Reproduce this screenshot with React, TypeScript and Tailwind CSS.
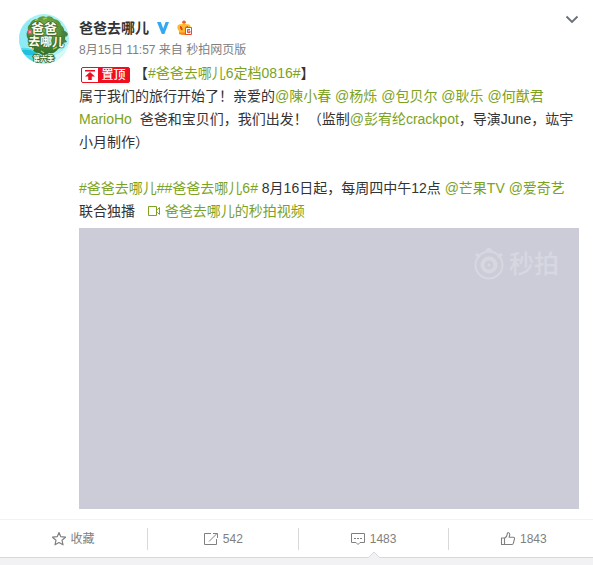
import type { ReactNode } from 'react'

interface ActionItem {
  id: string
  label: string
  icon: ReactNode
  active?: boolean
}

const actions: ActionItem[] = [
  { id: 'favorite', label: '收藏', icon: <StarIcon /> },
  { id: 'forward', label: '542', icon: <ForwardIcon /> },
  { id: 'comment', label: '1483', icon: <CommentIcon />, active: true },
  { id: 'like', label: '1843', icon: <LikeIcon /> },
]

function StarIcon() {
  return (
    <svg className="h-4 w-4" viewBox="0 0 16 16" fill="none" stroke="#808080" strokeWidth="1.2" strokeLinejoin="round">
      <path d="M8 1.5l1.8 4.2 4.7.5-3.5 3 1 4.6-4-2.3-4 2.3 1-4.6-3.5-3 4.7-.5z" />
    </svg>
  )
}

function ForwardIcon() {
  return (
    <svg className="h-4 w-4" viewBox="0 0 16 16" fill="none" stroke="#808080" strokeWidth="1">
      <path d="M8 2.5H1.5v11h12V8" />
      <path d="M6 10.5l7.8-7.8M10 2.5h4.5V7" />
    </svg>
  )
}

function CommentIcon() {
  return (
    <svg className="h-4 w-4" viewBox="0 0 16 16" fill="none" stroke="#808080" strokeWidth="1">
      <path d="M1.5 2.5h13v9H10l-2 2-2-2H1.5z" />
      <path d="M4 7.5h2M7 7.5h2M10 7.5h2" />
    </svg>
  )
}

function LikeIcon() {
  return (
    <svg className="h-4 w-4" viewBox="0 0 16 16" fill="none" stroke="#808080" strokeWidth="1.1" strokeLinejoin="round">
      <path d="M1.5 7h3v6.5h-3z" />
      <path d="M4.5 7.2C6.6 6 7.3 4.3 7.4 2.4c.1-1 2.2-1 2.3.8.1 1.2-.3 2.2-.6 3h4.2c1 0 1.4.8 1.2 1.6l-1.2 4.6c-.2.7-.6 1.1-1.3 1.1H4.5" />
    </svg>
  )
}

function Avatar() {
  return (
    <svg className="h-[50px] w-[50px]" viewBox="0 0 50 50" role="img" aria-label="爸爸去哪儿">
      <defs>
        <clipPath id="avatar-clip">
          <circle cx="25" cy="25" r="25" />
        </clipPath>
        <radialGradient id="globe" cx="0.5" cy="0.3" r="0.7">
          <stop offset="0" stopColor="#86b84d" />
          <stop offset="0.6" stopColor="#4f8d37" />
          <stop offset="1" stopColor="#2f6b2d" />
        </radialGradient>
      </defs>
      <g clipPath="url(#avatar-clip)">
        <rect width="50" height="50" fill="#a9f1f4" />
        <path d="M0 16l7-7 4-4 2 7-4 12 3 9H0z" fill="#8eeaf4" />
        <path d="M0 34q8-2 17 3l4 5-3 8H0z" fill="#52dcec" />
        <path d="M2 36q9-1 14 2l2 3q-9 1-14-1z" fill="#1fc0de" />
        <path d="M36 41q8-3 13-11l1 20H34z" fill="#d3faf5" />
        <path
          d="M11 10q2-5 7-5 4-4 9-2 5-2 8 2 6 1 7 6 4 3 3 8 3 5-1 9 0 5-5 7-3 5-9 4-5 4-10 0-6 0-7-6-5-3-4-8-3-5 0-9-1-4 2-6z"
          fill="url(#globe)"
        />
        <path d="M42 17q4-2 7 3-1 4-4 2zM43 24q4 1 5 4l-4 1z" fill="#458047" />
        <path d="M16 7l3-2M24 5l4-1M33 7l3 2M12 29l3 4M22 37l3 2M34 35l4-2" stroke="#9bca54" strokeWidth="1.5" />
        <circle cx="11" cy="18" r="2.5" fill="#e45c73" />
        <circle cx="11" cy="18" r="1" fill="#ffb5b5" />
        <circle cx="42" cy="27" r="1.2" fill="#ee6c55" />
        <circle cx="14" cy="35" r="1" fill="#f6c84b" />
        <g
          fill="#fffdf0"
          stroke="#3d6b2c"
          strokeWidth="1.6"
          paintOrder="stroke"
          fontFamily="Noto Sans CJK SC, sans-serif"
          fontWeight="700"
        >
          <text x="12" y="19" fontSize="13">爸爸</text>
          <text x="9" y="32" fontSize="12" transform="rotate(2 25 30)">去哪儿</text>
          <text x="14" y="47" fontSize="7">第六季</text>
        </g>
      </g>
    </svg>
  )
}

function VerifiedIcon() {
  return (
    <svg className="h-3 w-3" viewBox="0 0 12 12" role="img" aria-label="微博认证">
      <path d="M0 0h3.8l2.4 6.4L8.6 0H12L7.4 12H4.8z" fill="#35a8f0" />
    </svg>
  )
}

function MemberIcon() {
  return (
    <svg className="h-4 w-4" viewBox="0 0 16 16" role="img" aria-label="微博会员">
      <circle cx="7" cy="2.2" r="1.8" fill="#ee5a24" />
      <path d="M.3 7Q.8 3.8 3.6 4.2 5.4 4.4 7 3.2q1.6 1.2 3.4 1 2.8-.4 3.3 2.8.1 2.6-1.7 4v3H2v-3Q.2 9.600.3 7z" fill="#ffb92c" />
      <path d="M3 6q2.400.2 2.700 4.500Q2.700 9.800 3 6zM11 6q-2.400.2-2.700 4.500Q11.300 9.800 11 6z" fill="#d83a1e" />
      <path d="M2 12.500h7V15Q4 15.200 2 14z" fill="#f58420" />
      <path d="M8.500 7.500h6v7h-6z" fill="#fff" stroke="#e64b36" />
      <path d="M13 9.500h-2.500v3H13v-1.500h-2.500" fill="none" stroke="#e64b36" />
    </svg>
  )
}

function PinBadge() {
  return (
    <span className="mr-1 ml-0.5 inline-flex h-4 w-[49px] items-stretch overflow-hidden rounded-xs border border-[#ef0d20] bg-[#ef0d20] align-[-3px] leading-[14px] text-white">
      <span className="flex w-4 items-center justify-center bg-white">
        <svg className="h-3 w-3" viewBox="0 0 12 12" fill="#ef0d20" aria-hidden="true">
          <path d="M1 1h10v1.6H1zM6 3l5 4.5H7.8V11H4.2V7.5H1z" />
        </svg>
      </span>
      <span className="flex flex-1 items-center justify-center text-xs font-medium">置顶</span>
    </span>
  )
}

function TextLink({ children }: { children: ReactNode }) {
  return (
    <a href="#" className="text-[#7ba221] hover:underline">
      {children}
    </a>
  )
}

function VideoWatermark() {
  return (
    <div className="absolute top-5 right-5 flex items-center gap-1 text-[#d7d7e1]">
      <svg className="h-8 w-8" viewBox="0 0 32 32" fill="none" stroke="currentColor" strokeWidth="2">
        <circle cx="16" cy="17" r="13.5" />
        <circle cx="16" cy="17" r="6.5" strokeWidth="4" />
        <circle cx="16" cy="17" r="1.5" fill="currentColor" stroke="none" />
        <path d="M3 6l4 3M29 6l-4 3M13.500 3L16 1l2.500 2" strokeWidth="3" />
      </svg>
      <span className="text-[25px] leading-8 font-medium">秒拍</span>
    </div>
  )
}

function PostHeader() {
  return (
    <header>
      <div className="flex h-7 items-center gap-2">
        <a href="#" className="text-sm font-bold text-[#333]">爸爸去哪儿</a>
        <VerifiedIcon />
        <MemberIcon />
      </div>
      <div className="text-xs leading-4 text-[#808080]">
        <a href="#">8月15日 11:57</a> 来自 <a href="#">秒拍网页版</a>
      </div>
    </header>
  )
}

function PostText() {
  return (
    <div className="text-sm leading-[23px] text-[#333]">
      <p>
        <PinBadge />
        【<TextLink>#爸爸去哪儿6定档0816#</TextLink>】
      </p>
      <p>
        属于我们的旅行开始了！亲爱的<TextLink>@陳小春</TextLink> <TextLink>@杨烁</TextLink>{' '}
        <TextLink>@包贝尔</TextLink> <TextLink>@耿乐</TextLink> <TextLink>@何猷君 MarioHo</TextLink>
        &nbsp; 爸爸和宝贝们，我们出发！（监制<TextLink>@彭宥纶crackpot</TextLink>，导演June，竑宇小月制作）
      </p>
      <p className="mt-[23px]">
        <TextLink>#爸爸去哪儿#</TextLink>
        <TextLink>#爸爸去哪儿6#</TextLink> 8月16日起，每周四中午12点 <TextLink>@芒果TV</TextLink>{' '}
        <TextLink>@爱奇艺</TextLink> 联合独播 &nbsp;{' '}
        <TextLink>
          <svg className="mr-1 inline h-3.5 w-3.5 align-[-2px]" viewBox="0 0 14 14" fill="none" stroke="currentColor" aria-hidden="true">
            <path d="M1.5 2.5h8v9h-8zM9.500 5.500h1l2-2v7l-2-2h-1" />
          </svg>
          爸爸去哪儿的秒拍视频
        </TextLink>
      </p>
    </div>
  )
}

function ActionBar() {
  return (
    <footer className="border-t border-b border-t-[#f2f2f5] border-b-[#d9d9d9]">
      <ul className="-mr-1.5 -ml-0.5 grid h-[37px] grid-cols-4 items-center">
        {actions.map((action) => (
          <li key={action.id} className="relative flex h-full items-center">
            <button type="button" className="flex h-[22px] w-full items-center justify-center gap-1 border-r border-[#d9d9d9] text-xs text-[#808080]">
              {action.icon}
              <span>{action.label}</span>
            </button>
            {action.active && (
              <svg className="absolute -bottom-px left-1/2 h-[7px] w-3 -translate-x-1/2" viewBox="0 0 12 7" aria-hidden="true">
                <path d="M0 7l6-6 6 6" fill="#f2f2f5" stroke="#d9d9d9" />
              </svg>
            )}
          </li>
        ))}
      </ul>
    </footer>
  )
}

export default function App() {
  return (
    <main className="min-h-screen bg-[#f2f2f5] font-['Liberation_Sans','Noto_Sans_CJK_SC',sans-serif]">
      <article className="relative overflow-hidden bg-white">
        <button type="button" aria-label="更多" className="absolute top-3 right-3.5 flex h-3.5 w-3.5 items-center justify-center">
          <svg className="h-3.5 w-3.5" viewBox="0 0 14 14" fill="none" stroke="#696e78" strokeWidth="1.8">
            <path d="M1.5 4.5L7 10l5.5-5.5" />
          </svg>
        </button>
        <div className="flex gap-2.5 pt-3.5 pr-3.5 pl-[19px]">
          <a href="#" className="h-[50px] w-[50px] shrink-0">
            <Avatar />
          </a>
          <div className="min-w-0 flex-1 pb-2.5">
            <PostHeader />
            <div className="mt-1">
              <PostText />
            </div>
            <div className="relative mt-[5px] h-[281px] bg-[#ccccd8]">
              <VideoWatermark />
            </div>
          </div>
        </div>
        <ActionBar />
      </article>
    </main>
  )
}
